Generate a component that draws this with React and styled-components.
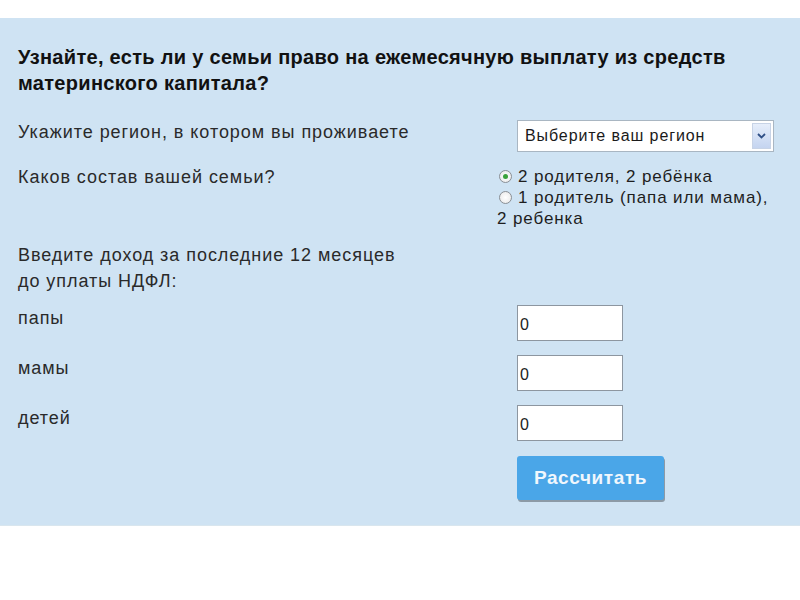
import React, { useState } from 'react';
import styled, { createGlobalStyle } from 'styled-components';

const GlobalStyle = createGlobalStyle`
  html, body {
    margin: 0;
    padding: 0;
    background: #ffffff;
  }
  body {
    font-family: "Liberation Sans", Arial, sans-serif;
    color: #222;
  }
`;

const Page = styled.div`
  width: 800px;
  height: 600px;
  padding-top: 18px;
  box-sizing: border-box;
`;

const Panel = styled.section`
  background: #cfe3f3;
  height: 508px;
  box-sizing: border-box;
  padding: 26px 18px 0 18px;
  border-bottom: 1px solid #d9e6ee;
`;

const Title = styled.h2`
  margin: 0 0 23px;
  font-size: 20px;
  line-height: 26px;
  font-weight: bold;
  letter-spacing: 0.3px;
  color: #111;
`;

const Row = styled.div`
  display: grid;
  grid-template-columns: 479px 1fr;
  align-items: start;
  min-height: ${(p) => p.$h || 0}px;
`;

const Label = styled.div`
  font-size: 18px;
  line-height: 26px;
  letter-spacing: 0.95px;
  color: #2a2a2a;
  padding-top: ${(p) => p.$pt || 0}px;
`;

const Control = styled.div`
  padding-left: ${(p) => (p.$flush ? 0 : 20)}px;
  padding-top: ${(p) => p.$pt || 0}px;
`;

const Select = styled.div`
  width: 257px;
  height: 32px;
  box-sizing: border-box;
  border: 1px solid #a9b6c2;
  background: #fff;
  display: flex;
  align-items: center;
  justify-content: space-between;
  padding: 0 2px 0 7px;
  font-size: 16px;
  letter-spacing: 0.9px;
  color: #1a1a1a;
`;

const Arrow = styled.span`
  width: 19px;
  height: 26px;
  display: flex;
  align-items: center;
  justify-content: center;
  background: linear-gradient(#e6eefb, #c4d4f0);
  border: 1px solid #c7d3e6;
  box-sizing: border-box;
`;

const RadioGroup = styled.div`
  width: 274px;
  font-size: 17px;
  line-height: 21px;
  letter-spacing: 0.9px;
  color: #1e1e1e;
  padding-top: 2px;
`;

const RadioLine = styled.label`
  display: inline;
`;

const Dot = styled.span`
  display: inline-block;
  width: 13px;
  height: 13px;
  box-sizing: border-box;
  border-radius: 50%;
  border: 1px solid #8a8f95;
  background: radial-gradient(circle, #fff 0%, #e6e6e6 100%);
  margin: 0 6px 0 2px;
  vertical-align: -1px;
  position: relative;

  &::after {
    content: '';
    display: ${(p) => (p.$on ? 'block' : 'none')};
    position: absolute;
    left: 3px;
    top: 3px;
    width: 5px;
    height: 5px;
    border-radius: 50%;
    background: #3aa23a;
  }
`;

const Heading = styled.div`
  font-size: 18px;
  line-height: 26px;
  letter-spacing: 0.95px;
  color: #2a2a2a;
  margin: 13px 0 11px;
`;

const IncomeInput = styled.input`
  width: 106px;
  height: 36px;
  box-sizing: border-box;
  border: 1px solid #8d96a0;
  background: #fff;
  font-family: "Liberation Sans", Arial, sans-serif;
  font-size: 16px;
  color: #222;
  padding: 4px 2px 0;
  margin-bottom: 14px;
  outline: none;
`;

const Button = styled.button`
  width: 147px;
  height: 44px;
  margin-top: 1px;
  border: none;
  border-radius: 3px;
  background: #4aa6e8;
  box-shadow: 1px 2px 0 #8c9aa6;
  color: #f0f7fd;
  font-family: "Liberation Sans", Arial, sans-serif;
  font-size: 19px;
  font-weight: bold;
  letter-spacing: 0.6px;
  cursor: pointer;
`;

const incomeRows = ['папы', 'мамы', 'детей'];

const App = () => {
  const [family, setFamily] = useState(2);

  return (
    <Page>
      <GlobalStyle />
      <Panel>
        <Title>
          Узнайте, есть ли у семьи право на ежемесячную выплату из средств материнского капитала?
        </Title>

        <Row $h={45}>
          <Label>Укажите регион, в котором вы проживаете</Label>
          <Control $pt={1}>
            <Select>
              Выберите ваш регион
              <Arrow>
                <svg width="9" height="6" viewBox="0 0 9 6">
                  <path d="M1 1l3.5 3.5L8 1" fill="none" stroke="#2f4f86" strokeWidth="1.8" />
                </svg>
              </Arrow>
            </Select>
          </Control>
        </Row>

        <Row>
          <Label>Каков состав вашей семьи?</Label>
          <Control $flush>
            <RadioGroup>
              <RadioLine onClick={() => setFamily(2)}>
                <Dot $on={family === 2} />2 родителя, 2 ребёнка
              </RadioLine>
              <br />
              <RadioLine onClick={() => setFamily(1)}>
                <Dot $on={family === 1} />1 родитель (папа или мама), 2 ребенка
              </RadioLine>
            </RadioGroup>
          </Control>
        </Row>

        <Heading>
          Введите доход за последние 12 месяцев
          <br />
          до уплаты НДФЛ:
        </Heading>

        {incomeRows.map((name) => (
          <Row key={name}>
            <Label $pt={0}>{name}</Label>
            <Control>
              <IncomeInput defaultValue="0" />
            </Control>
          </Row>
        ))}

        <Row>
          <span />
          <Control>
            <Button>Рассчитать</Button>
          </Control>
        </Row>
      </Panel>
    </Page>
  );
};

export default App;
